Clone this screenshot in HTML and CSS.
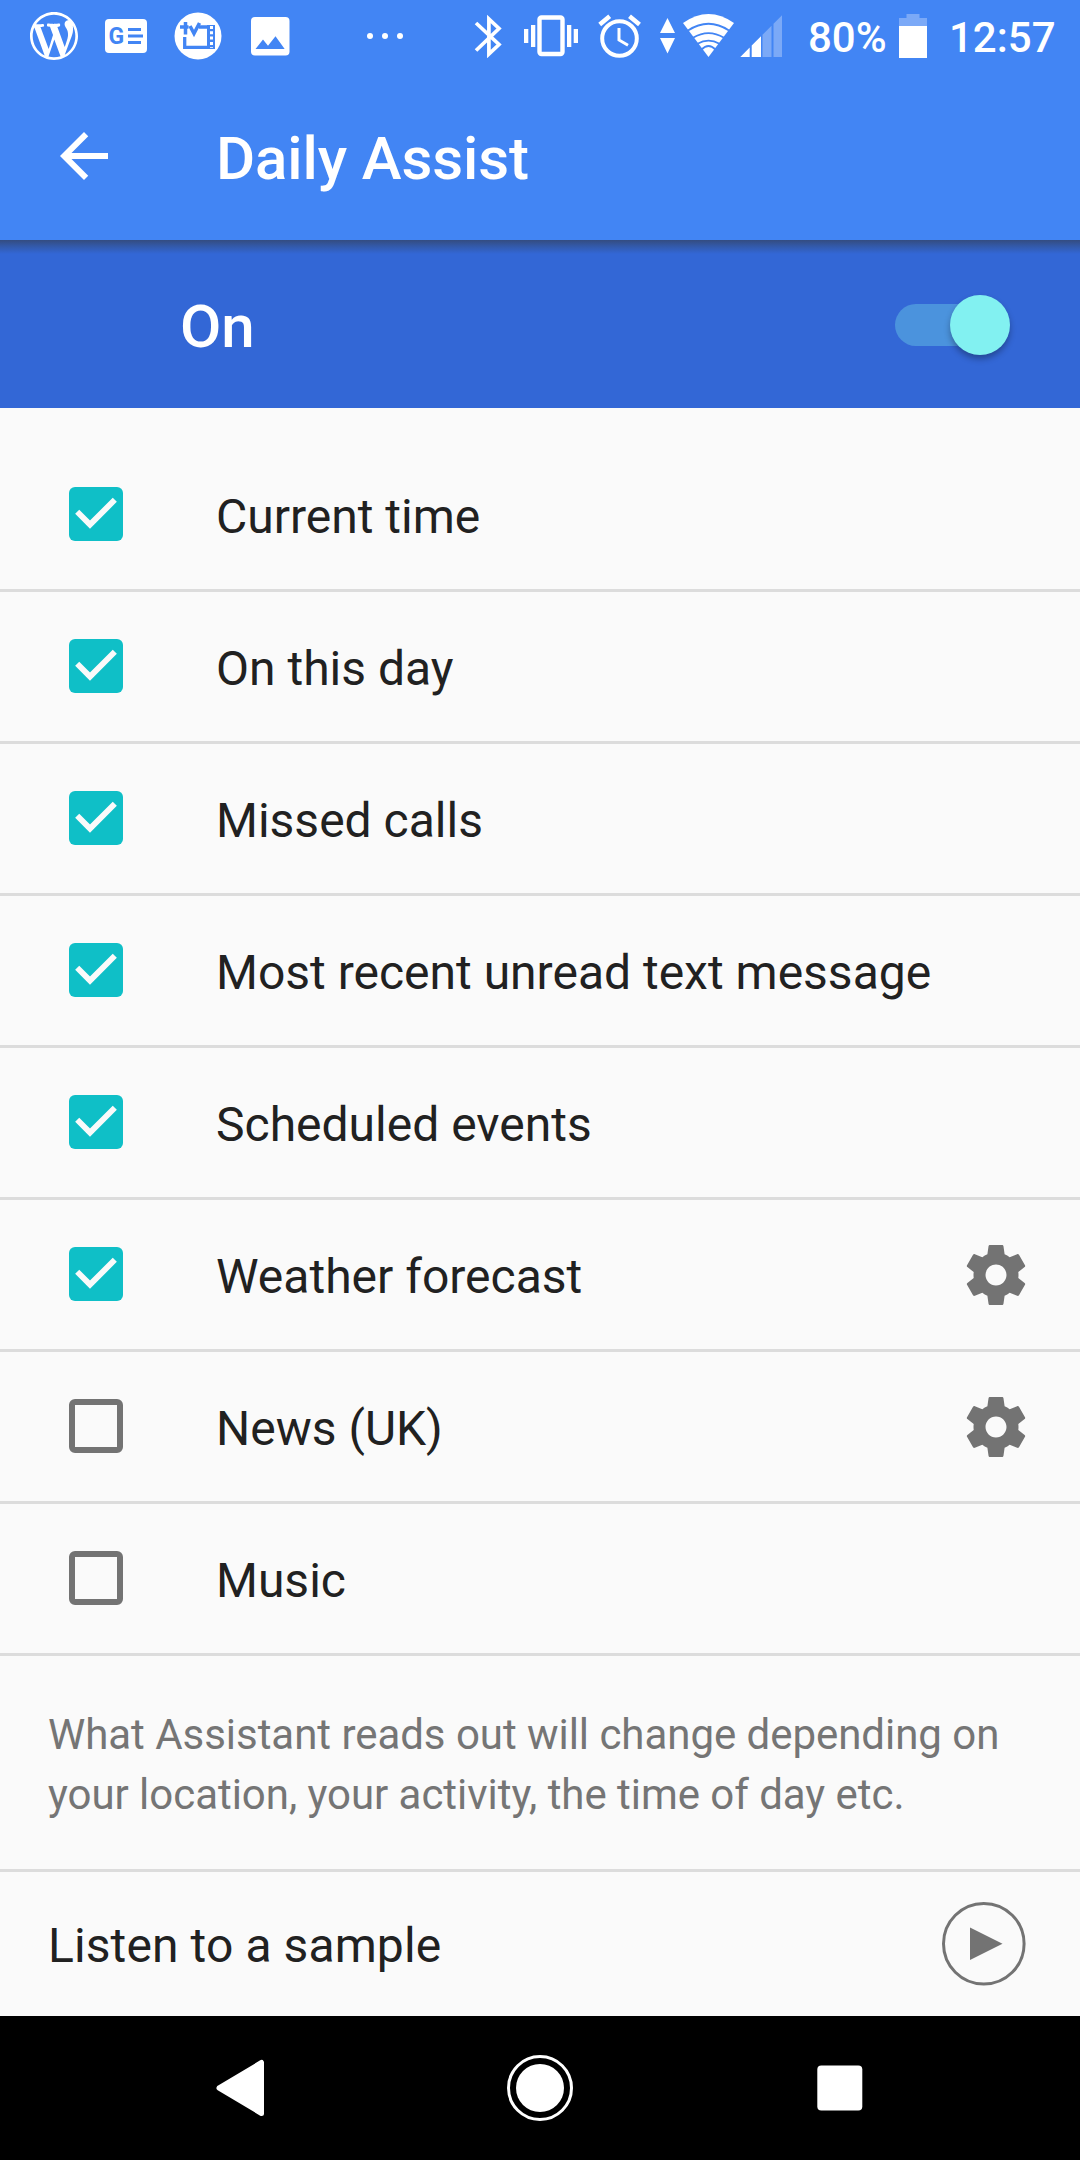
FILE: index.html
```
<!DOCTYPE html>
<html lang="en">
<head>
<meta charset="utf-8">
<title>Daily Assist</title>
<link rel="stylesheet" href="styles.css">
</head>
<body>
<svg class="defs" width="0" height="0" aria-hidden="true">
  <symbol id="gear" viewBox="0 0 24 24"><path d="M19.43 12.98c.04-.32.07-.64.07-.98s-.03-.66-.07-.98l2.11-1.65c.19-.15.24-.42.12-.64l-2-3.46c-.12-.22-.39-.3-.61-.22l-2.49 1c-.52-.4-1.08-.73-1.69-.98l-.38-2.65C14.46 2.18 14.25 2 14 2h-4c-.25 0-.46.18-.49.42l-.38 2.65c-.61.25-1.17.59-1.69.98l-2.49-1c-.23-.09-.49 0-.61.22l-2 3.46c-.13.22-.07.49.12.64l2.11 1.65c-.04.32-.07.65-.07.98s.03.66.07.98l-2.11 1.65c-.19.15-.24.42-.12.64l2 3.46c.12.22.39.3.61.22l2.49-1c.52.4 1.08.73 1.69.98l.38 2.65c.03.24.24.42.49.42h4c.25 0 .46-.18.49-.42l.38-2.65c.61-.25 1.17-.59 1.69-.98l2.49 1c.23.09.49 0 .61-.22l2-3.46c.12-.22.07-.49-.12-.64l-2.11-1.65zM12 15.5c-1.93 0-3.5-1.57-3.5-3.5s1.57-3.5 3.5-3.5 3.5 1.57 3.5 3.5-1.57 3.5-3.5 3.5z"/></symbol>
  <symbol id="tick" viewBox="0 0 54 54"><path d="M8.2 24.8 21 37.6 45.8 12.8" fill="none" stroke="#fafafa" stroke-width="5.8"/></symbol>
</svg>

<header class="header">
  <div class="status">
    <svg class="wordpress" width="48" height="48" viewBox="0 0 20 20" fill="#fff"><path fill-rule="evenodd" d="M20 10c0-5.51-4.49-10-10-10C4.48 0 0 4.49 0 10c0 5.52 4.48 10 10 10 5.51 0 10-4.48 10-10zM7.78 15.37L4.37 6.22c.55-.02 1.17-.08 1.17-.08.5-.06.44-1.13-.06-1.11 0 0-1.45.11-2.37.11-.18 0-.37 0-.58-.01C4.12 2.69 6.87 1.11 10 1.11c2.33 0 4.45.87 6.05 2.34-.68-.11-1.65.39-1.65 1.58 0 .74.45 1.36.9 2.1.35.61.55 1.36.55 2.46 0 1.49-1.4 5-1.4 5l-3.03-8.37c.54-.02.82-.17.82-.17.5-.05.44-1.25-.06-1.22 0 0-1.44.12-2.38.12-.87 0-2.33-.12-2.33-.12-.5-.03-.56 1.2-.06 1.22l.92.08 1.26 3.41zM17.41 10c.24-.64.74-1.87.43-4.25.7 1.29 1.05 2.71 1.05 4.25 0 3.29-1.73 6.24-4.4 7.78.97-2.59 1.94-5.2 2.92-7.78zM6.1 18.09C3.12 16.65 1.11 13.53 1.11 10c0-1.3.23-2.48.72-3.59C3.25 10.3 4.67 14.2 6.1 18.09zm4.03-6.63l2.58 6.98c-.86.29-1.76.45-2.71.45-.79 0-1.57-.11-2.29-.33.81-2.38 1.62-4.74 2.42-7.1z"/></svg>
    <svg class="news" width="42" height="34" viewBox="0 0 42 34"><rect width="42" height="34" rx="4" fill="#fff"/><text class="news-mark" x="3.500" y="25">G</text><path d="M23 9h13v3H23zM23 15.500h15v3H23zM23 22h13v3H23z" fill="#4285f4"/></svg>
    <svg class="tv" width="48" height="48" viewBox="174 12 48 48"><circle cx="198" cy="36" r="23.500" fill="#fff"/><g fill="none" stroke="#4285f4"><path stroke-width="3.500" d="M185.500 22v12.500M180 27h8.500M190 26l4 7.500 5.500-10.500"/><path stroke-width="3.300" d="M199 27h9M184.700 37v10.300H208"/></g><path d="M207 25h8v24h-8z" fill="#4285f4"/><path d="M211.500 26v22" stroke="#fff" stroke-width="3" stroke-dasharray="3 2.300"/></svg>
    <svg class="photo" width="40" height="40" viewBox="250 16 40 40"><rect x="251" y="17" width="38.500" height="38.500" rx="4" fill="#fff"/><path d="M255.500 49l7.500-9.500 5 6.200 7.500-9.500 9.200 12.800z" fill="#4285f4"/></svg>
    <svg class="more" width="38" height="8" viewBox="0 0 38 8" fill="#fff"><circle cx="4" cy="4" r="3"/><circle cx="19" cy="4" r="3"/><circle cx="34" cy="4" r="3"/></svg>
    <svg class="bluetooth" width="28" height="44" viewBox="474 14 28 44" fill="none" stroke="#fff" stroke-width="3.700"><path d="M476 23l23 21.500-10.100 9.500V19L499 28.500 476 50.500"/></svg>
    <svg class="vibrate" width="54" height="42" viewBox="524 15 54 42"><rect x="539.500" y="17.500" width="23" height="36.500" rx="2" fill="none" stroke="#fff" stroke-width="4.400"/><path d="M524 29h4.300v14H524zM531 25h4.300v22H531zM567 25h4.300v22H567zM573.700 29h4.300v14h-4.300z" fill="#fff"/></svg>
    <svg class="alarm" width="44" height="44" viewBox="598 14 44 44" fill="none" stroke="#fff"><circle cx="619.500" cy="38.500" r="17.300" stroke-width="4"/><path d="M619 28v12l9 5.200" stroke-width="3"/><path d="M599.700 24.500l10-8.200M639.500 24.500l-10-8.200" stroke-width="4.500"/></svg>
    <svg class="traffic" width="16" height="36" viewBox="660 18 16 36" fill="#fff"><path d="M660 33l7.500-15 7.500 15zM660 38h15l-7.500 15.500z"/></svg>
    <svg class="wifi" width="52" height="44" viewBox="682 13 52 44"><path d="M683 23Q708.500 5 734 23L708.500 57z" fill="#fff"/><g fill="none" stroke="#4285f4" stroke-width="1.800"><path d="M688 30.500Q708.500 17 729 30.500"/><path d="M693 37.800Q708.500 28.500 724 37.800"/><path d="M697.500 43.700Q708.500 37.500 719.500 43.700"/><path d="M701.500 49.500Q708.500 42.500 715.500 49.500"/></g></svg>
    <svg class="signal" width="42" height="42" viewBox="740 15 42 42" fill="#fff"><path d="M740.300 57l9.400-9.400V57zM751.700 45.600l9.300-9.300V57h-9.300z"/><path fill-opacity=".3" d="M762.500 34.800l9-9V57h-9zM773.500 23.800l8.500-8.500V57h-8.500z"/></svg>
    <span class="percent">80%</span>
    <svg class="battery" width="28" height="44" viewBox="0 0 28 44" fill="#fff"><path fill-opacity=".3" d="M7.500 0h13v4H28v8H0V4h7.500z"/><path d="M0 12h28v32H0z"/></svg>
    <span class="clock">12:57</span>
  </div>
  <div class="toolbar">
    <svg class="back" width="72" height="72" viewBox="0 0 24 24" fill="#fff"><path d="M20 11H7.830l5.590-5.590L12 4l-8 8 8 8 1.410-1.410L7.830 13H20v-2z"/></svg>
    <h1 class="title">Daily Assist</h1>
  </div>
</header>

<section class="master">
  <span class="master-label">On</span>
  <span class="switch"><span class="thumb"></span></span>
</section>

<main class="content">
  <ul class="options">
    <li class="row"><span class="box checked"><svg><use href="#tick"/></svg></span><span class="label">Current time</span></li>
    <li class="row"><span class="box checked"><svg><use href="#tick"/></svg></span><span class="label">On this day</span></li>
    <li class="row"><span class="box checked"><svg><use href="#tick"/></svg></span><span class="label">Missed calls</span></li>
    <li class="row"><span class="box checked"><svg><use href="#tick"/></svg></span><span class="label">Most recent unread text message</span></li>
    <li class="row"><span class="box checked"><svg><use href="#tick"/></svg></span><span class="label">Scheduled events</span></li>
    <li class="row"><span class="box checked"><svg><use href="#tick"/></svg></span><span class="label">Weather forecast</span><svg class="gear"><use href="#gear"/></svg></li>
    <li class="row"><span class="box"></span><span class="label">News (UK)</span><svg class="gear"><use href="#gear"/></svg></li>
    <li class="row"><span class="box"></span><span class="label">Music</span></li>
  </ul>
  <p class="hint">What Assistant reads out will change depending on your location, your activity, the time of day etc.</p>
  <div class="sample">
    <span class="label sample-label">Listen to a sample</span>
    <svg class="play" width="84" height="84" viewBox="0 0 84 84"><circle cx="41.800" cy="41.800" r="40.300" fill="none" stroke="#737373" stroke-width="3"/><path d="M28 25.500l32.500 16.200L28 58z" fill="#737373"/></svg>
  </div>
</main>

<nav class="navbar">
  <svg width="66" height="66" viewBox="0 0 66 66" fill="#fff" stroke="#fff" stroke-linejoin="round"><path d="M12 33 54.500 7.500v51z" stroke-width="5"/></svg>
  <svg width="66" height="66" viewBox="0 0 66 66"><circle cx="33" cy="33" r="31.500" fill="none" stroke="#fff" stroke-width="3"/><circle cx="33" cy="33" r="24" fill="#fff"/></svg>
  <svg width="66" height="66" viewBox="0 0 66 66"><rect x="10.300" y="10.500" width="45" height="45" rx="4" fill="#fff"/></svg>
</nav>
</body>
</html>
```
FILE: styles.css
```
* { box-sizing: border-box; }
body {
  margin: 0;
  width: 1080px;
  height: 2160px;
  display: flex;
  flex-direction: column;
  overflow: hidden;
  background: #fafafa;
  color: #212121;
  font-family: Roboto, sans-serif;
}
svg { display: block; flex: none; }
.defs { position: absolute; }

.header { height: 240px; background: #4285f4; color: #fff; }
.status { display: flex; align-items: center; height: 72px; padding-left: 30px; }
.news { margin-left: 27px; }
.news-mark { font: 700 23px Roboto, sans-serif; fill: #4285f4; }
.tv { margin-left: 27px; }
.photo { margin-left: 28px; }
.more { margin-left: 76px; }
.bluetooth { margin-left: 70px; }
.vibrate { margin-left: 22px; }
.alarm { margin-left: 20px; }
.traffic { margin-left: 18px; }
.wifi { margin-left: 6px; margin-top: -2px; }
.signal { margin-left: 6px; }
.percent, .clock { font-size: 42px; font-weight: 500; line-height: 48px; white-space: nowrap; margin-top: 4px; }
.percent { margin-left: 26px; width: 91px; }
.clock { margin-left: 22px; }

.toolbar { display: flex; align-items: center; height: 168px; padding: 0 48px; }
.title { margin: 6px 0 0 96px; font-size: 60px; font-weight: 500; line-height: 70px; letter-spacing: -.1px; }

.master {
  display: flex;
  align-items: center;
  justify-content: space-between;
  height: 168px;
  padding: 0 72px 0 180px;
  color: #fff;
  background: linear-gradient(#344c80, #3359a8 6px, #3367d6 14px);
}
.master-label { font-size: 60px; font-weight: 500; line-height: 70px; margin-top: 6px; }
.switch {
  display: flex;
  align-items: center;
  justify-content: flex-end;
  width: 113px;
  height: 42px;
  margin-top: 2px;
  background: linear-gradient(90deg, #4b93dd 90px, transparent 90px);
  border-radius: 21px;
}
.thumb { width: 60px; height: 60px; margin: -1px -1.5px 0 0; border-radius: 50%; background: #82f1f1; box-shadow: 0 4px 6px rgba(0, 0, 0, .3); }

.content { height: 1608px; padding-top: 32px; }
.options { margin: 0; padding: 0; list-style: none; }
.row { display: flex; align-items: center; height: 152px; padding: 0 48px 0 69px; border-bottom: 3px solid #dcdcdc; }
.box { flex: none; width: 54px; height: 54px; margin: 0 93px 1px 0; border: 6px solid #737373; border-radius: 6px; }
.box.checked { border: 0; background: #0fbfc7; }
.box svg { width: 54px; height: 54px; }
.label { flex: 1; font-size: 48px; line-height: 56px; padding-top: 4px; white-space: nowrap; }
.gear { width: 72px; height: 72px; fill: #737373; }
.hint { height: 216px; margin: 0; padding: 49px 48px 0; border-bottom: 3px solid #dcdcdc; color: #757575; font-size: 42px; line-height: 60px; letter-spacing: -.04px; }
.sample { display: flex; align-items: center; height: 144px; padding: 0 54px 0 48px; }
.sample-label { letter-spacing: .1px; }

.navbar { display: flex; align-items: center; justify-content: center; gap: 234px; height: 144px; background: #000; }
```
